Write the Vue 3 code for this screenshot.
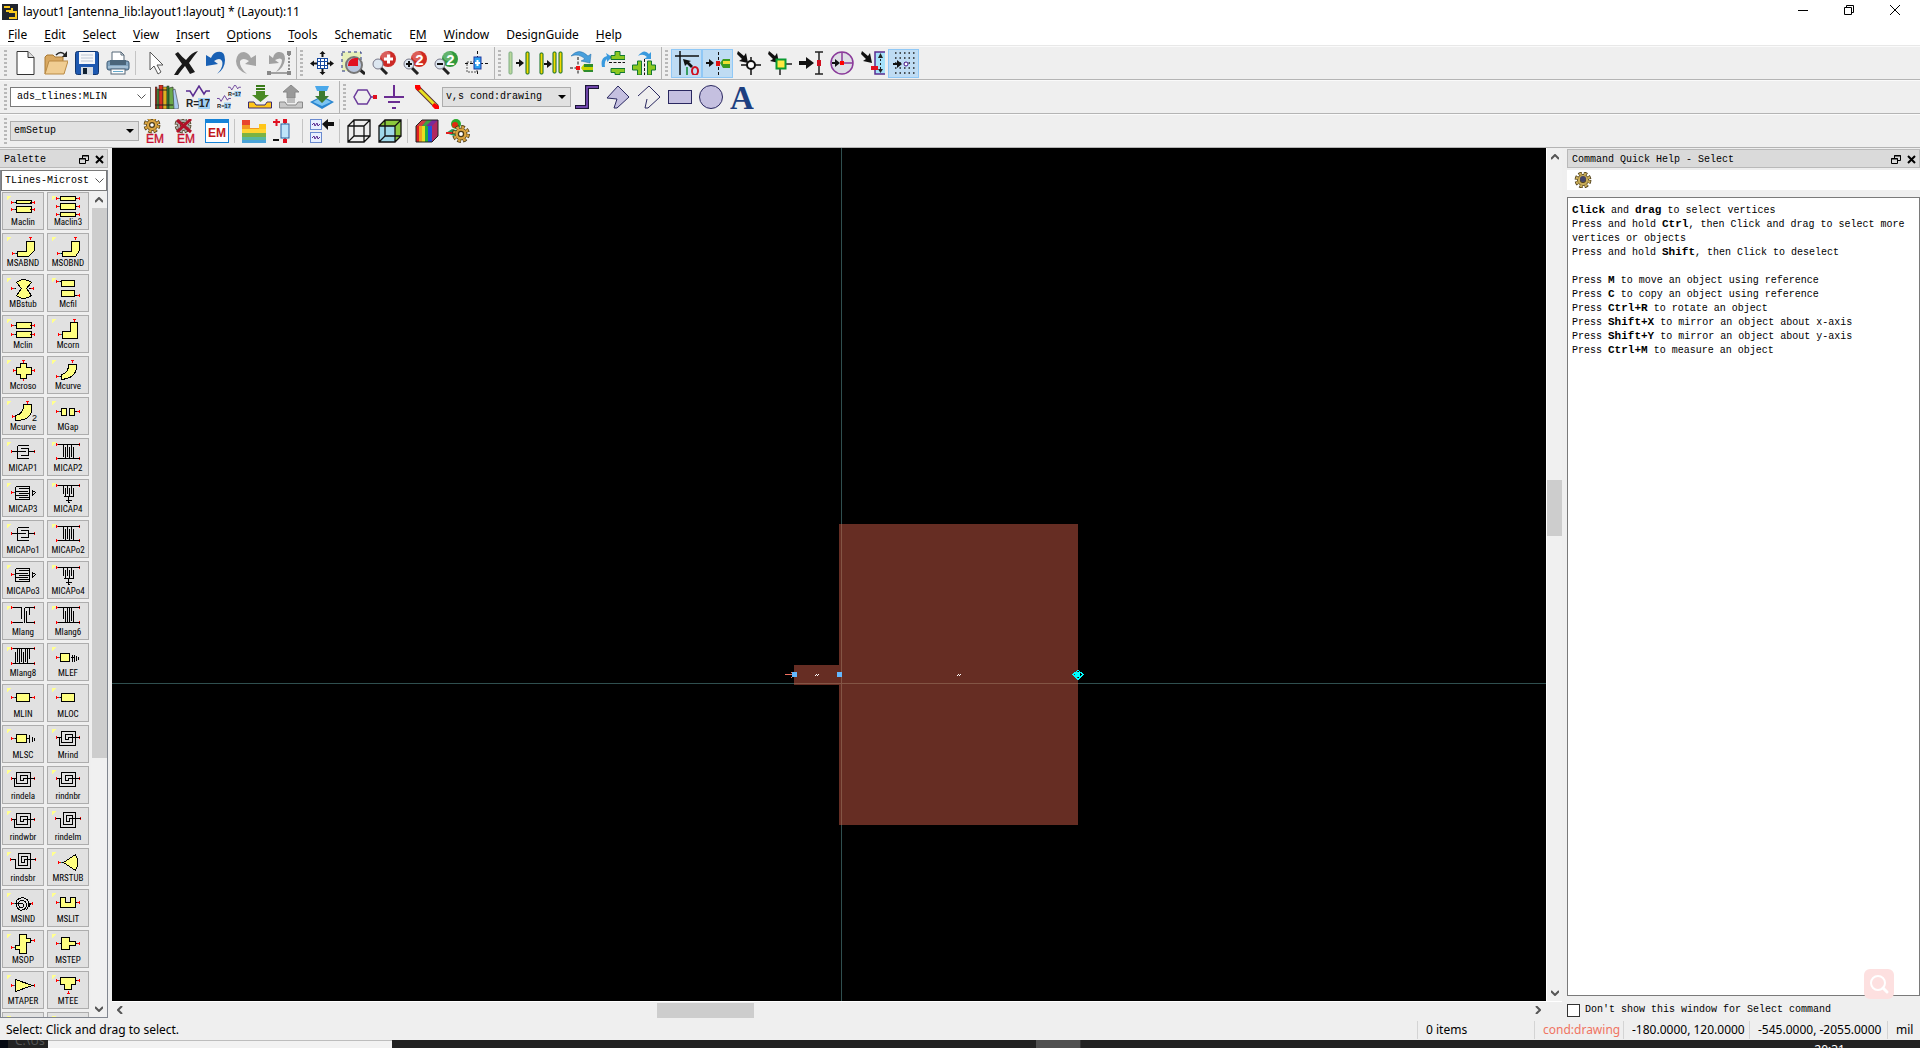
<script setup>
const menus = [
  ['', 'F', 'ile'], ['', 'E', 'dit'], ['', 'S', 'elect'], ['', 'V', 'iew'], ['', 'I', 'nsert'],
  ['', 'O', 'ptions'], ['', 'T', 'ools'], ['S', 'c', 'hematic'], ['E', 'M', ''], ['', 'W', 'indow'],
  ['DesignGuide', '', ''], ['', 'H', 'elp'],
]

const gear = (x, y, s, c = '#d9a441') =>
  `<g transform="translate(${x} ${y}) scale(${s})"><circle r="8" fill="none" stroke="#4a3a18" stroke-width="5" stroke-dasharray="4 2.280"/><circle r="7" fill="${c}" stroke="#4a3a18"/><circle r="8" fill="none" stroke="${c}" stroke-width="3" stroke-dasharray="3 3.280" stroke-dashoffset="-.5"/><circle r="3" fill="#fff" stroke="#4a3a18" stroke-width="1.500"/></g>`
const em = '<text x="12" y="23.500" text-anchor="middle" font-family="Liberation Sans" font-size="12" fill="#c8102e" stroke="#c8102e" stroke-width=".3">EM</text>'
const arrowR = (x, y, l = 7) => `<path d="M${x} ${y - 1}h${l - 4}v-3l5 4-5 4v-3h${4 - l}z" fill="#111"/>`
const arrowD = '<path d="M1 0L7 5 9 2 11 12 2 10 5 8 0 3z" fill="#111"/>'
const magnify = (fill, t, g) =>
  `<circle cx="16" cy="8" r="8" fill="${fill}"/><circle cx="14" cy="5" r="5" fill="#fff" opacity=".25"/><text x="16.500" y="13.500" text-anchor="middle" font-family="Liberation Sans" font-weight="700" font-size="15" fill="#fff">${t}</text><path d="M9 17l6 6" stroke="#222" stroke-width="3"/><circle cx="6" cy="13" r="5" fill="#dce6f0" stroke="#778" />${g}`
const book = (x, y, w, c) => `<rect x="${x}" y="${y}" width="${w}" height="${24 - y}" fill="${c}" stroke="#222" stroke-width=".5"/>`
const resistor = (x, y, s) => `<g transform="translate(${x} ${y}) scale(${s})"><path d="M0 6h4l3 5 6-10 5 8 2-3h4" fill="none" stroke="#5a2d91" stroke-width="1.500"/><rect x="12" y="13" width="12" height="11" fill="#9fd0f5"/><text x="0" y="22" font-family="Liberation Sans" font-weight="700" font-size="10" fill="#222">R=17</text></g>`

const I = {
  new: '<path d="M4 .5h11l6 6v17H4z" fill="#fff" stroke="#333"/><path d="M15 .5v6h6" fill="#ddd" stroke="#333"/>',
  open: '<path d="M1 23V6l2-2h6l2 2h8v4" fill="#d9a860" stroke="#a87832"/><path d="M1 23L5 10h19l-4 13z" fill="#f0cd92" stroke="#b98a44"/><path d="M12 4q5-5 9 0" fill="none" stroke="#222" stroke-width="1.500"/><path d="M23 0v6h-5z" fill="#222"/>',
  save: '<rect x=".5" y=".5" width="23" height="23" rx="2" fill="#1d58b0" stroke="#12376f"/><rect x="4" y="1" width="16" height="12" fill="#f5f7fa"/><path d="M6 4h12M6 7h12M6 10h12" stroke="#bcc6d4"/><rect x="6" y="16" width="12" height="8" fill="#d4dae2"/><rect x="8" y="17" width="4" height="6" fill="#123"/>',
  print: '<path d="M6 10V1h9l3 3v6" fill="#fff" stroke="#567"/><path d="M15 1v3h3" fill="none" stroke="#567"/><rect x="1" y="10" width="22" height="9" rx="2" fill="#83a5c0" stroke="#3c5a74"/><path d="M4 9h16v5H4z" fill="#4a657a"/><path d="M2 16h20" stroke="#c9dcea"/><rect x="5" y="18" width="14" height="5" fill="#fff" stroke="#567"/><path d="M7 20.500h10" stroke="#6ac"/>',
  cursor: '<path d="M7 1v18l4-4 4 8 3-2-4-7h6z" fill="#fff" stroke="#555"/>',
  del: '<path d="M4 1q4 5 8 8 6-8 12-9-5 6-9 12l6 9-5 2-5-8q-5 6-7 9H0q4-7 8-11L1 3z" fill="#1a1a1a"/>',
  undo: '<path d="M1 4v11l12-2-4-3q6-4 8 0 2 6-5 13 8-5 8-14 0-10-8-8-4 1-6 6z" fill="#1860b4"/>',
  redo: '<path d="M20 4v11L9 13l4-3q-6-4-9 0-1 6 7 13Q0 19 0 10 1 1 8 1q5 1 7 6z" fill="#a4a4a4"/>',
  last: '<path d="M2 4v9l10-1-4-3q6-3 7 0 0 5-6 12 8-4 9-13 0-8-7-7-4 1-5 6z" fill="#a0a0a0"/><path d="M22 3v16" stroke="#888" stroke-width="2" stroke-dasharray="2 1.500"/><path d="M3 22h18" stroke="#888" stroke-width="1.500"/><path d="M20 0h4v4h-4zM20 20h4v4h-4zM0 20h4v4H0z" fill="#888"/>',
  pan: '<rect x="7" y="7" width="11" height="11" fill="#fff"/><path d="M7.500 7v11M10.500 7v11M14.500 7v11M17.500 7v11M7 7.500h11M7 10.500h11M7 14.500h11M7 17.500h11" stroke="#1548a0"/><path d="M12.500 0l3 3h-2v3h-2V3h-2zM12.500 24l3-3h-2v-3h-2v3h-2zM0 12.500l4-3v2h3v2H4v2zM24 12.500l-4-3v2h-3v2h3v2z" fill="#111"/>',
  zarea: '<rect x="1" y="1" width="19" height="19" fill="#e7f0ba" stroke="#203080" stroke-dasharray="3 3"/><path d="M18 18l6 5" stroke="#222" stroke-width="3"/><circle cx="13" cy="14" r="8" fill="#b9c5dc" stroke="#777" stroke-width="2"/><path d="M7 14a7 7 0 0 1 7-7h3v8H7z" fill="#e01020"/>',
  zin: magnify('#cc2a26', '', '<path d="M12 8h9M16.500 3.500v9" stroke="#fff" stroke-width="3"/>'),
  z2: magnify('#d02a20', '2', '<path d="M3 13h6M6 10v6" stroke="#111" stroke-width="2"/>'),
  z2o: magnify('#2f9a3c', '2', '<path d="M3 13h6" stroke="#111" stroke-width="2"/>'),
  center: '<path d="M12.500 0v24M0 12.500h24" stroke="#111" stroke-dasharray="3 2"/><rect x="2" y="11" width="10" height="10" fill="none" stroke="#555" stroke-dasharray="2 1"/><rect x="9" y="6" width="7" height="12" fill="#2aa0f0" stroke="#2038a0"/><path d="M12.500 9v6M10 12h5" stroke="#fff" stroke-width="2"/>',
  bar1: '<rect x="1" y="1" width="3" height="22" rx="1" fill="#b9d79b" stroke="#7fae84"/><rect x="18" y="1" width="3" height="22" rx="1" fill="#f4d900" stroke="#0a6a20"/>' + arrowR(8, 12),
  bar2: '<rect x="1" y="2" width="3" height="21" rx="1" fill="#f4d900" stroke="#0a6a20"/><rect x="14" y="1" width="3" height="21" rx="1" fill="#f4d900" stroke="#0a6a20"/><rect x="20" y="1" width="3" height="21" rx="1" fill="#f4d900" stroke="#0a6a20"/>' + arrowR(5, 13),
  rot: '<path d="M1 5Q9-4 18 5l3-2-1 9-9-2 4-2Q9 2 1 5z" fill="#4aa0dc" stroke="#1b68a8" stroke-width=".5"/><path d="M0 17h6M8 6v18" stroke="#111" stroke-dasharray="3 1.500"/><rect x="6" y="15" width="4" height="4" fill="#e11"/><path d="M14 13h9v8h-9l-3-4z" fill="#c8d400"/><path d="M14 13h9v3h-9zM13 19h10v2h-9z" fill="#2e8b2e"/>',
  mirx: '<path d="M1 16Q-1 7 6 5l-1-3 6 4-5 5V8q-3 2-2 8z" fill="#3a9ade"/><path d="M14 .5h5v4h5v4H10v-4h4zM10 17.500h14v4h-5v2h-5v-2h-4z" fill="#8cc820" stroke="#173" /><path d="M8 11.500h16" stroke="#111" stroke-dasharray="3 1.500"/>',
  miry: '<path d="M6 5Q12-3 17 3l2-2v7h-7l3-2Q11 2 6 5z" fill="#3a9ade"/><path d="M5.500 10h4v14h-4v-5h-5v-5h5zM15.500 10h4v4h4v5h-4v5h-4z" fill="#8cc820" stroke="#173"/><path d="M12.500 8v16" stroke="#111" stroke-dasharray="3 1.500"/>',
  ortho: '<path d="M5 0v24M0 5h24" stroke="#111" stroke-width="1.500"/><path d="M8 8l8 2-2 1 4 4-2 2-4-4-2 2z" fill="#111"/><path d="M12 16v8" stroke="#0a8a30" stroke-width="1.500"/><ellipse cx="20" cy="20" rx="3" ry="4" fill="none" stroke="#d01020" stroke-width="2"/>',
  snappin: '<path d="M12.500 1v23" stroke="#111" stroke-dasharray="3 2"/>' + arrowR(0, 12) + '<rect x="10" y="10" width="4" height="5" fill="#e01010"/><path d="M14 12l3-4h8v9h-8z" fill="#3a9a20"/><path d="M17 10h8v3h-8z" fill="#f0e030"/>',
  snapv: arrowD + '<path d="M14 6v18M4 14h20" stroke="#111" stroke-width="1.500"/><circle cx="14" cy="14" r="4" fill="#fff" stroke="#111" stroke-width="2"/>',
  snapm: arrowD + '<path d="M12 12v12M8 13h16" stroke="#222" stroke-width="1.500"/><rect x="8.500" y="8.500" width="9" height="9" fill="#ffe840" stroke="#0a9a30" stroke-width="2"/>',
  snape: '<path d="M0 10h7V6l8 6-8 6v-4H0z" fill="#111"/><path d="M16 1h8M16 23h8M20 1v22" stroke="#222" stroke-width="1.500"/><rect x="18" y="9" width="4" height="6" fill="#d01020"/>',
  snapc: '<circle cx="12" cy="12" r="11" fill="#dfdfe6" stroke="#8a3a9a" stroke-width="1.500"/><path d="M12 1v11h11" fill="none" stroke="#8a3a9a" stroke-width="1.500"/>' + arrowR(2, 12) + '<rect x="10" y="10" width="4" height="4" fill="#f00"/>',
  snapi: arrowD + '<path d="M24 1H14v22h10" fill="#a5e2fa" stroke="#5a2d91" stroke-width="1.500"/><rect x="10" y="15" width="7" height="4" fill="#e01020"/><path d="M19.500 4v16" stroke="#222" stroke-dasharray="2 2"/><path d="M17 7l2.500-5L22 7zM17 18l2.500 4 2.500-4z" fill="#222"/>',
  grid: '<path d="M3 2h22M3 7h22M3 12h22M3 17h22M3 22h22" stroke="#222" stroke-width="1.500" stroke-dasharray="1.500 3"/>' + arrowR(1, 13, 8) + '<circle cx="14" cy="13" r="2" fill="#fff" stroke="#418"/>',
  books: book(0, 2, 2, '#a83a28') + book(2, 4, 2, '#4a9a3a') + book(4, 0, 4, '#d83020') + book(8, 2, 4, '#e0b020') + book(12, 1, 2, '#2b8a3a') + '<path d="M14 3l4-1 2 21-2 1h-4z" fill="#6aa84a" stroke="#222" stroke-width=".6"/><path d="M18 5l2-1 4 19-2 1h-3z" fill="#a9c9f0" stroke="#222" stroke-width=".5"/><path d="M0 20h18M4 5h8" stroke="#222"/>',
  r17: resistor(0, 0, 1),
  rr17: resistor(11, -1, 0.54) + resistor(0, 10, 0.58),
  down: '<path d="M8 1h9M8 4h9" stroke="#3a7a1a" stroke-width="2"/><path d="M8 6h9v4h4l-8.500 7L4 10h4z" fill="#4a8a24"/><path d="M.5 17H6l2 3h9l2-3h4.500v6H.5z" fill="#ffc61a" stroke="#3a2a70"/>',
  up: '<path d="M12 0l8 7h-4v6H8V7H4zM8 15h8M8 17h8" fill="#999" stroke="#888"/><path d="M.5 17H6l2 3h9l2-3h4.500v6H.5z" fill="#c8c8c8" stroke="#888"/>',
  layer: '<path d="M12 11l12 6-12 7-12-7z" fill="#2a86d0"/><path d="M12 12l9 5-9 4-9-4z" fill="#7cc4f2"/><path d="M5 1h14l-2 5H7z" fill="#4aa8ea"/><path d="M9 6h6v5h4l-7 7-7-7h4z" fill="#3d7a30"/>',
  port: '<path d="M5 5h9l4 7-4 7H5l-4-7z" fill="none" stroke="#6a3a9a" stroke-width="1.500"/><path d="M18 12h3" stroke="#6a3a9a" stroke-width="1.500"/><rect x="20" y="10" width="4" height="4" fill="#e01020"/>',
  gnd: '<path d="M10 0v12M0 12h20M4 17h12M8 23h4" stroke="#6a2c92" stroke-width="2"/>',
  wire: '<path d="M2 2l20 20" stroke="#5a3030" stroke-width="5"/><path d="M3 3l18 18" stroke="#e8e020" stroke-width="3"/><path d="M0 0h5l1 4-3 2-3-3zM19 18l5 3v3h-4l-3-3z" fill="#f00"/>',
  path: '<path d="M0 22h12V2h12" fill="none" stroke="#1c1638" stroke-width="4"/><path d="M1 22h11V2h11" fill="none" stroke="#85c" stroke-width="1.500"/>',
  poly: '<path d="M12 1l11 11-12 11H8l3-9-10-1z" fill="#c5c0e0" stroke="#2a2860"/>',
  pline: '<path d="M1 11L12 1l11 11-12 11H8l2-9" fill="none" stroke="#2a2860"/>',
  rect: '<rect x=".5" y="5.500" width="23" height="13" fill="#c5c0e0" stroke="#2a2860"/>',
  circ: '<circle cx="12" cy="12" r="11.500" fill="#c5c0e0" stroke="#2a2860"/>',
  text: '<text x="12" y="23.500" text-anchor="middle" font-family="Liberation Serif" font-weight="700" font-size="33" fill="#1c3f80">A</text>',
  em1: gear(9, 6, 0.8) + em,
  em2: gear(9, 6, 0.8, '#aaa') + em + '<path d="M3 1l14 12M17 0L3 13" stroke="#b01028" stroke-width="3"/>',
  em3: '<rect x=".5" y=".5" width="23" height="23" fill="#fff" stroke="#1683d8"/><rect x="0" y="0" width="24" height="4" fill="#1683d8"/><text x="12" y="18" text-anchor="middle" font-family="Liberation Sans" font-weight="700" font-size="12" fill="#c01818">EM</text>',
  subs: '<path d="M0 1h8v5H0z" fill="#e8452c"/><path d="M0 6h8v3h16v2H0z" fill="#f29a20"/><path d="M17 5h7v5h-7z" fill="#ffc61a"/><path d="M0 10h24v4H0z" fill="#ffd530"/><path d="M0 14h24v4H0z" fill="#7cb342"/><path d="M0 18h24v4H0z" fill="#58b8a0"/><path d="M0 21h24v3H0z" fill="#4aa3d8"/>',
  portedit: '<path d="M0 3h7M3.500 0v7" stroke="#e01020" stroke-width="2"/><path d="M0 21h6" stroke="#111" stroke-width="2"/><path d="M12 0v24" stroke="#222"/><rect x="8" y="5" width="8" height="14" fill="#bfe4fa" stroke="#2a60a0"/><path d="M10 0h4v4h-4zM10 20h4v4h-4z" fill="#e01020"/>',
  comp: '<g fill="#e8f0ff" stroke="#6a8ad0"><rect x=".5" y=".5" width="11" height="10"/><rect x=".5" y="13.500" width="11" height="10"/></g><path d="M2 6l2-2 1 3 2-3 1 3 2-2M2 19l2-2 1 3 2-3 1 3 2-2" fill="none" stroke="#5a2d91"/><path d="M12 5l6-5v3h6v4h-6v4z" fill="#111"/>',
  cube: '<path d="M1 7h16v16H1zM7 1h16v16H7zM1 7l6-6M17 7l6-6M17 23l6-6M1 23l6-6" fill="none" stroke="#111" stroke-width="1.300"/>',
  cube2: '<path d="M1 7l6-6h16v16l-6 6H1z" fill="#8cc83c"/><path d="M1 7h16v16H1z" fill="#9fd8e8"/><path d="M1 7h16v16H1zM7 1h16v16H7zM1 7l6-6M17 7l6-6M17 23l6-6M1 23l6-6" fill="none" stroke="#111" stroke-width="1.300"/>',
  cube3: '<path d="M1 7l6-6h16v16l-6 6H1z" fill="#7a2a9a"/><path d="M1 7h3v16H1z" fill="#e02020"/><path d="M4 7h3v16H4z" fill="#f0a020"/><path d="M7 7h3v16H7z" fill="#e8e020"/><path d="M10 7h3v16h-3z" fill="#20b040"/><path d="M13 7h4v16h-4z" fill="#2050e0"/><path d="M17 7l6-6v16l-6 6z" fill="#b02860"/><path d="M1 7l6-6h5L7 7z" fill="#d04040"/><path d="M7 7l5-6h5l-6 6z" fill="#40a040"/><path d="M1 7l6-6h16v16l-6 6H1z" fill="none" stroke="#222"/>',
  emgear: '<circle cx="10" cy="5" r="5" fill="#2aa82a"/><circle cx="9" cy="6" r="3" fill="#e02a10"/><path d="M0 14l6-4 8 2-6 5z" fill="#28a060"/><path d="M0 14h8" stroke="#e02020" stroke-width="2"/>' + gear(15, 15, 0.85),
}

const row1 = [
  { items: ['new', 'open', 'save', 'print', '|', 'cursor', 'del', 'undo', 'redo', 'last'] },
  { items: ['pan', 'zarea', 'zin', 'z2', 'z2o', 'center'] },
  { items: ['bar1', 'bar2', 'rot', 'mirx', 'miry'] },
  { items: ['ortho', 'snappin', 'snapv', 'snapm', 'snape', 'snapc', 'snapi', 'grid'] },
]
const active = ['ortho', 'snappin', 'grid']
const row2a = ['books', 'r17', 'rr17', 'down', 'up', 'layer']
const row2b = ['port', 'gnd', 'wire']
const row2c = ['path', 'poly', 'pline', 'rect', 'circ', 'text']
const row3 = ['em1', 'em2', 'em3', '|', 'subs', 'portedit', '|', 'comp', '|', 'cube', 'cube2', '|', 'cube3', 'emgear']

const Y = '#ffff80'
const pin = (x, y) => `<path d="M${x} ${y - 1}h1v3h-1zM${x} ${y}h3v1h-3z" fill="#f00"/>`
const L = (y, x = 9) => `<path d="M${x} ${y}h5v1h-5z" fill="#000"/>` + pin(x, y) + `<path d="M${x + 3} ${y}h1v1h-1z" fill="#088"/>`
const R = (y, x = 32) => `<path d="M${x - 4} ${y}h5v1h-5z" fill="#000"/><path d="M${x} ${y - 1}h1v3h-1zM${x - 2} ${y}h3v1h-3z" fill="#f00"/>`
const T = (x, y = 4) => `<path d="M${x - 1} ${y}h3v1h-3zM${x} ${y}h1v3h-1z" fill="#f00"/>`
const B = (x, y = 24) => `<path d="M${x - 1} ${y}h3v1h-3zM${x} ${y - 2}h1v3h-1z" fill="#f00"/>`
const box = (x, y, w, h) => `<rect x="${x}.5" y="${y}.5" width="${w}" height="${h}" fill="${Y}" stroke="#000"/>`
const shape = (d) => `<path transform="translate(.5 .5)" d="${d}" fill="${Y}" stroke="#000"/>`
const line = (d) => `<path transform="translate(.5 .5)" d="${d}" fill="none" stroke="#000"/>`
const spiral = L(12) + R(12) + line('M9 12H12V20H28V6H14V17H25V9H18V14H21V12H32')
const spiral2 = L(11, 8) + R(11, 33) + line('M8 11H13V20H28V5H16V17H25V8H19V14H22V11H33')
const cap1 = L(13) + R(13) + line('M9 13H15M15 7V20M15 7H26M15 13H23M15 20H26M26 10V17M26 10H18M26 17H18M26 13H32')
const cap2 = L(6) + R(6) + L(20) + R(20) + line('M10 6H32M10 20H32M16 6V18M18 8V20M20 6V18M22 8V20M24 6V18M26 8V20')
const cap3 = L(13) + line('M13 7V20M13 7H27M13 12H25M13 16H25M13 20H27M16 9H27M16 14H27M16 18H27M27 7V20M30 11L33 13L30 16Z')
const cap4 = L(6) + R(6) + line('M10 6H32M16 6V14M18 8V17M20 6V14M22 8V17M24 6V14M26 8V17M16 17H26M21 17V22M18 21H24M20 23H22')
const elbow = (cut) => T(28) + L(20, 10) + shape(`M24 8H32V17L${cut} 23H15V18H24Z`)

const parts = [
  ['Maclin', box(14, 8, 15, 3) + box(14, 14, 15, 6) + L(10) + R(10) + L(17) + R(17)],
  ['Maclin3', box(13, 4, 15, 4) + box(13, 11, 15, 6) + box(13, 20, 15, 4) + L(6) + R(6) + L(14) + R(14) + L(22) + R(22)],
  ['MSABND', elbow(26)], ['MSOBND', elbow(28)],
  ['MBstub', L(14) + R(14, 31) + shape('M14 8Q21 2 29 8L24 14L29 21Q21 27 14 21L19 14Z')],
  ['Mcfil', L(7) + R(21) + box(14, 6, 13, 6) + box(14, 16, 13, 6)],
  ['Mclin', box(14, 7, 15, 6) + box(14, 16, 15, 6) + L(10) + R(10) + L(19) + R(19)],
  ['Mcorn', T(27) + L(19, 11) + shape('M23 7H30V23H15V16H23Z')],
  ['Mcroso', L(14, 11) + R(14, 32) + T(21) + B(21, 25) + shape('M18 7H24V11H29V18H24V22H18V18H14V11H18Z')],
  ['Mcurve', T(25) + L(20) + shape('M21 8H29V12Q27 22 14 23V18Q21 17 21 8Z')],
  ['Mcurve', T(25) + L(19, 10) + shape('M21 7H29V14Q27 23 13 23V18Q21 17 21 7Z') + '<text x="30" y="24" font-family="Liberation Sans" font-size="9">2</text>'],
  ['MGap', L(14) + R(14) + box(14, 11, 5, 7) + box(22, 11, 5, 7)],
  ['MICAP1', cap1], ['MICAP2', cap2], ['MICAP3', cap3], ['MICAP4', cap4],
  ['MICAPo1', cap1], ['MICAPo2', cap2], ['MICAPo3', cap3], ['MICAPo4', cap4],
  ['Mlang', L(5) + R(5) + L(20) + R(20) + line('M10 5H19V16M10 20H20M22 5V20M22 5H32M24 8V20M24 20H32M27 5V12')],
  ['Mlang6', L(5) + R(5) + L(20) + R(20) + line('M10 5H32M10 20H32M16 5V16M18 8V20M20 5V20M22 5V20M24 5V18M26 8V20')],
  ['Mlang8', L(5) + R(5) + L(20) + R(20) + line('M10 5H32M10 20H32M13 8V20M15 5V18M17 5V20M19 5V18M21 8V20M23 5V18M25 5V20M27 5V15')],
  ['MLEF', L(14) + box(13, 10, 9, 8) + line('M23 14H26M25 11V18M27 11V18M29 12V17M31 13V16')],
  ['MLIN', L(13) + R(13) + box(14, 9, 13, 8)], ['MLOC', L(13) + box(14, 9, 13, 8)],
  ['MLSC', L(13) + box(14, 9, 10, 8) + line('M24 13H27M27 9V17M30 11V16M32 12V15')],
  ['Mrind', spiral], ['rindela', spiral], ['rindnbr', spiral], ['rindwbr', spiral], ['rindelm', spiral2], ['rindsbr', spiral2],
  ['MRSTUB', L(14, 11) + shape('M16 14L28 6Q33 14 28 22Z')],
  ['MSIND', L(14) + R(14, 30) + line('M13 14H19Q22 14 21 17Q18 20 16 16Q15 10 21 11Q26 14 23 19Q17 23 14 17Q12 9 20 8Q27 9 26 16L24 21M26 18L28 14')],
  ['MSLIT', L(13) + R(13) + shape('M13 8H18V13H23V8H28V18H13Z')],
  ['MSOP', R(10) + L(17) + shape('M17 4H24V8H28V12H24V23H17V19H13V15H17Z')],
  ['MSTEP', L(13) + R(13) + shape('M14 7H22V11H28V15H22V19H14Z')],
  ['MTAPER', L(14) + R(14) + shape('M13 8L30 14L13 20Z')],
  ['MTEE', L(9) + R(9) + B(21, 22) + shape('M13 6H28V13H24V18H17V13H13Z')],
  ['', ''], ['', ''],
]

const help = [
  [['Click', 1], [' and '], ['drag', 1], [' to select vertices']],
  [['Press and hold '], ['Ctrl', 1], [', then Click and drag to select more vertices or objects']],
  [['Press and hold '], ['Shift', 1], [', then Click to deselect']],
  [['\u00a0']],
  [['Press '], ['M', 1], [' to move an object using reference']],
  [['Press '], ['C', 1], [' to copy an object using reference']],
  [['Press '], ['Ctrl+R', 1], [' to rotate an object']],
  [['Press '], ['Shift+X', 1], [' to mirror an object about x-axis']],
  [['Press '], ['Shift+Y', 1], [' to mirror an object about y-axis']],
  [['Press '], ['Ctrl+M', 1], [' to measure an object']],
]
const float = '<path d="M3.500 3V.5h6v5H7M.5 3.500h6v5h-6zM3 1h7M0 4h7" fill="none" stroke="#000"/>'
const cross = '<path d="M1 1l7 7M8 1L1 8" stroke="#000" stroke-width="2"/>'
const helpGear = gear(9, 8, 0.8, '#c8ac58') + '<circle cx="9" cy="7" r="3" fill="#446"/>'
</script>

<template>
  <div class="app">
    <header class="title">
      <svg class="logo" width="16" height="16"><rect width="16" height="16" fill="#20242c" /><path d="M2 3h6M4 7h6v-3M7 8h7v6H7" fill="none" stroke="#f7c81e" stroke-width="2" /></svg>
      <span>layout1 [antenna_lib:layout1:layout] * (Layout):11</span>
      <div class="winbtns">
        <button aria-label="Minimize"><svg width="10" height="10"><path d="M0 5.500h10" stroke="#000" /></svg></button>
        <button aria-label="Restore"><svg width="10" height="10"><path d="M.5 2.500h7v7h-7zM2.500 2V.5h7v7H8" fill="none" stroke="#000" /></svg></button>
        <button aria-label="Close"><svg width="10" height="10"><path d="M0 0l10 10M10 0L0 10" stroke="#000" /></svg></button>
      </div>
    </header>

    <nav class="menu">
      <button v-for="m in menus" :key="m.join('')">{{ m[0] }}<u>{{ m[1] }}</u>{{ m[2] }}</button>
    </nav>

    <div class="bar">
      <div v-for="(g, k) in row1" :key="k" class="group">
        <i class="grip"></i>
        <template v-for="(n, j) in g.items" :key="j">
          <i v-if="n === '|'" class="sep"></i>
          <button v-else class="tool" :class="{ on: active.includes(n) }" :aria-label="n"><svg width="24" height="24" v-html="I[n]"></svg></button>
        </template>
      </div>
    </div>
    <div class="bar">
      <div class="group">
        <i class="grip"></i>
        <div class="combo white lib"><select aria-label="Component"><option>ads_tlines:MLIN</option></select><svg width="9" height="6"><path d="M.5.5l4 4 4-4" fill="none" stroke="#555" /></svg></div>
        <button v-for="n in row2a" :key="n" class="tool" :aria-label="n"><svg width="24" height="24" v-html="I[n]"></svg></button>
      </div>
      <div class="group">
        <i class="grip"></i>
        <button v-for="n in row2b" :key="n" class="tool" :aria-label="n"><svg width="24" height="24" v-html="I[n]"></svg></button>
        <div class="combo grey"><select aria-label="Layer"><option>v,s cond:drawing</option></select><svg width="8" height="4"><path d="M0 0h8L4 4z" /></svg></div>
        <button v-for="n in row2c" :key="n" class="tool" :aria-label="n"><svg width="24" height="24" v-html="I[n]"></svg></button>
      </div>
    </div>
    <div class="bar">
      <div class="group">
        <i class="grip"></i>
        <div class="combo grey setup"><select aria-label="EM setup"><option>emSetup</option></select><svg width="8" height="4"><path d="M0 0h8L4 4z" /></svg></div>
        <template v-for="(n, j) in row3" :key="j">
          <i v-if="n === '|'" class="sep"></i>
          <button v-else class="tool" :aria-label="n"><svg width="24" height="24" v-html="I[n]"></svg></button>
        </template>
      </div>
    </div>

    <main class="work">
      <aside class="palette">
        <div class="dockhead">
          <span>Palette</span>
          <button aria-label="Float"><svg width="10" height="9" v-html="float"></svg></button>
          <button aria-label="Close"><svg width="9" height="9" v-html="cross"></svg></button>
        </div>
        <div class="pbody">
          <div class="combo pal"><select aria-label="Palette"><option>TLines-Microst</option></select><svg width="9" height="6"><path d="M.5.5l4 4 4-4" fill="none" stroke="#555" /></svg></div>
          <div class="plist">
            <div class="grid">
              <button v-for="(p, k) in parts" :key="k" class="part">
                <svg width="40" height="24" viewBox="1 1 40 24" shape-rendering="crispEdges">
                  <path d="M5 4h4v1h-1v1h-1v1h-1v1h-1z" fill="#ffff90" /><g v-html="p[1]"></g>
                </svg>
                <span>{{ p[0] }}</span>
              </button>
            </div>
            <div class="vbar">
              <svg width="8" height="6"><path d="M0 5l4-4 4 4" fill="none" stroke="#555" stroke-width="2" /></svg>
              <i class="thumb"></i>
              <svg class="end" width="8" height="6"><path d="M0 1l4 4 4-4" fill="none" stroke="#555" stroke-width="2" /></svg>
            </div>
          </div>
        </div>
      </aside>

      <section class="view">
        <div class="vrow">
          <svg class="canvas" viewBox="0 0 1434 853" preserveAspectRatio="xMidYMid slice" shape-rendering="crispEdges">
            <path d="M729 0h1v853h-1zM0 535h1434v1H0z" fill="#2f4f4f" />
            <path d="M682 517h45V376h239v301H727V537h-45z" fill="#662d23" />
            <path d="M729 376h1v301h-1zM682 535h284v1H682z" fill="#835545" />
            <path d="M673 526h7v1h-7zM679 524h1v1h-1zM679 529h1v1h-1z" fill="#f07060" />
            <path d="M680 524h5v5h-5zM725 524h5v5h-5z" fill="#63b8ff" />
            <path d="M703 527h1v1h-1zM704 526h1v1h-1zM705 527h1v1h-1zM706 526h1v1h-1zM845 527h1v1h-1zM846 526h1v1h-1zM847 527h1v1h-1zM848 526h1v1h-1z" fill="#fff" />
            <path d="M963 524h5v5h-5z" fill="#0ff" />
            <path d="M961 526.500l5-4.500 5 4.500-5 5z" fill="none" stroke="#0ff" />
          </svg>
          <div class="vbar main">
            <svg width="8" height="6"><path d="M0 5l4-4 4 4" fill="none" stroke="#555" stroke-width="2" /></svg>
            <i class="thumb"></i>
            <svg class="end" width="8" height="6"><path d="M0 1l4 4 4-4" fill="none" stroke="#555" stroke-width="2" /></svg>
          </div>
        </div>
        <div class="hbar">
          <svg width="6" height="8"><path d="M5 0L1 4l4 4" fill="none" stroke="#555" stroke-width="2" /></svg>
          <i class="before"></i><i class="thumb"></i><i class="after"></i>
          <svg width="6" height="8"><path d="M1 0l4 4-4 4" fill="none" stroke="#555" stroke-width="2" /></svg>
        </div>
      </section>

      <aside class="help">
        <div class="dockhead">
          <span>Command Quick Help - Select</span>
          <button aria-label="Float"><svg width="10" height="9" v-html="float"></svg></button>
          <button aria-label="Close"><svg width="9" height="9" v-html="cross"></svg></button>
        </div>
        <div class="helptools"><button aria-label="Settings"><svg width="18" height="16" v-html="helpGear"></svg></button></div>
        <div class="helptext">
          <p v-for="(l, k) in help" :key="k"><template v-for="(s, j) in l" :key="j"><b v-if="s[1]">{{ s[0] }}</b><template v-else>{{ s[0] }}</template></template></p>
          <button class="find" aria-label="Search"><svg width="30" height="30"><circle cx="14" cy="14" r="7" fill="none" stroke="#fff" stroke-width="2" /><path d="M19 19l4 4" stroke="#fff" stroke-width="3" stroke-linecap="round" /></svg></button>
        </div>
        <label class="check"><input type="checkbox" /><span>Don't show this window for Select command</span></label>
      </aside>
    </main>

    <footer class="status">
      <span class="msg">Select: Click and drag to select.</span>
      <span class="cell items">0 items</span>
      <span class="cell layer">cond:drawing</span>
      <span class="cell pos">-180.0000, 120.0000</span>
      <span class="cell delta">-545.0000, -2055.0000</span>
      <span class="cell unit">mil</span>
    </footer>
    <div class="task">
      <i class="t1"></i><span class="t2">C:\Us</span><i class="t3"></i><i class="t4"></i><span class="clock">20:31</span>
    </div>
  </div>
</template>

<style>
body { overflow: hidden; }
</style>

<style scoped>
* { box-sizing: border-box; }
.app { display: flex; flex-direction: column; height: 100vh; background: #efefef; color: #000; font: 12px/16px "Noto Sans", "Open Sans", sans-serif; overflow: hidden; }
button { border: 0; padding: 0; margin: 0; background: none; font: inherit; color: inherit; }
svg { display: block; flex: none; }
i { flex: none; }
.title { display: flex; align-items: center; height: 23px; padding: 0 2px; gap: 5px; background: #fff; flex: none; }
.winbtns { display: flex; margin-left: auto; padding-bottom: 3px; }
.winbtns button { width: 46px; height: 20px; display: flex; align-items: center; justify-content: center; }
.menu { display: flex; height: 23px; padding: 1px 0 0 8px; gap: 17px; background: #fff; border-bottom: 1px solid #e8e8e8; flex: none; }
.menu button { height: 22px; white-space: nowrap; }
.menu u { text-underline-offset: 2px; }

.bar { display: flex; height: 34px; border-bottom: 1px solid #b4b4b4; border-top: 1px solid #fafafa; flex: none; }
.group { display: flex; align-items: center; border-right: 1px solid #b4b4b4; padding-right: 2px; }
.group:last-child { border-right: 0; }
.grip { width: 3px; height: 26px; margin: 0 3px; background: repeating-linear-gradient(#b8b8b8 0 2px, transparent 2px 4px); }
.group:first-child .grip { margin: 0 2px 0 4px; }
.sep { width: 1px; height: 24px; margin: 0 3px 0 2px; background: #c4c4c4; }
.tool { display: flex; align-items: center; justify-content: center; width: 31px; height: 29px; flex: none; }
.tool.on { background: #bfdcf3; border: 1px solid #90c8f6; }
.tool svg { overflow: hidden; }

.combo { position: relative; display: flex; align-items: center; flex: none; height: 20px; }
.combo select { appearance: none; width: 100%; height: 100%; margin: 0; border: 1px solid #adadad; border-radius: 0; background: #e1e1e1; padding: 0 3px; font: 10px/14px "Liberation Mono", monospace; color: #000; }
.combo svg { position: absolute; right: 5px; }
.combo.white { width: 141px; }
.combo.white select { background: #fff; border-color: #7a7a7a; padding: 0 6px; }
.combo.grey { width: 129px; }
.lib, .setup { margin-left: 1px; }

.work { display: flex; flex: 1; min-height: 0; }
.palette { display: flex; flex-direction: column; width: 112px; padding: 1px 4px 0 0; flex: none; }
.dockhead { display: flex; align-items: center; height: 19px; border: 1px solid #b9b9b9; background: #dadada; padding: 2px 3px 0 4px; gap: 6px; font: 10px/14px "Liberation Mono", monospace; flex: none; }
.dockhead span { margin-right: auto; }
.palette .dockhead { border-left: 0; }
.pbody { display: flex; flex-direction: column; flex: 1; min-height: 0; margin-top: 2px; border: 1px solid #828790; border-top: 0; }
.combo.pal { height: 21px; }
.combo.pal select { background: #fff; border: 1px solid #7a7a7a; padding: 1px 3px 0; }
.combo.pal svg { right: 3px; }
.plist { display: flex; flex: 1; min-height: 0; padding-left: 1px; }
.grid { display: grid; grid-template-columns: 42px 42px; grid-auto-rows: 38px; gap: 3px; align-content: start; overflow: hidden; padding-top: 1px; flex: 1; }
.part { display: flex; flex-direction: column; border: 1px solid #adadad; background: #e1e1e1; overflow: hidden; text-align: center; font: 9px/11px "Liberation Sans Narrow", "Roboto Condensed", "Liberation Sans", sans-serif; }
.vbar { display: flex; flex-direction: column; align-items: center; width: 16px; background: #f0f0f0; padding: 6px 0 5px; flex: none; }
.vbar .thumb { width: 15px; height: 550px; margin-top: 5px; background: #cdcdcd; }
.vbar .end { margin-top: auto; }

.view { display: flex; flex-direction: column; flex: 1; min-width: 0; }
.vrow { display: flex; flex: 1; min-height: 0; border-bottom: 1px solid #fff; }
.canvas { display: block; flex: 1 1 0; min-width: 0; width: 0; height: 100%; background: #000; }
.vbar.main { border-left: 1px solid #fff; }
.vbar.main .thumb { height: 56px; margin-top: 320px; }
.hbar { display: flex; align-items: center; height: 16px; padding: 0 21px 0 5px; flex: none; }
.hbar .thumb { width: 97px; height: 15px; background: #cdcdcd; }
.hbar .before { flex: 534; }
.hbar .after { flex: 781; }

.help { display: flex; flex-direction: column; width: 358px; padding: 1px 0 0 5px; flex: none; }
.helptools { height: 20px; margin-top: 2px; padding: 2px 7px; background: #fff; flex: none; }
.helptext { position: relative; flex: 1; min-height: 0; margin-top: 7px; border: 1px solid #7a7a7a; background: #fff; padding: 6px 4px; font: 10px/14px "Liberation Mono", monospace; }
.helptext p { margin: 0; }
.helptext b { font-size: 11px; line-height: 12px; }
.find { position: absolute; right: 25px; bottom: -4px; width: 30px; height: 30px; border-radius: 6px; background: #fde0e0; }
.check { display: flex; align-items: center; gap: 5px; height: 22px; padding-top: 6px; font: 10px/14px "Liberation Mono", monospace; flex: none; }
.check input { appearance: none; width: 13px; height: 13px; margin: 0; border: 1px solid #333; background: #fff; }

.status { display: flex; align-items: center; height: 22px; padding: 2px 0 0 6px; flex: none; }
.msg { flex: 1; }
.cell { height: 18px; line-height: 18px; padding-left: 8px; border-left: 1px solid #d4d4d4; white-space: nowrap; }
.items { width: 117px; }
.layer { width: 89px; color: #f07462; }
.pos { width: 126px; }
.delta { width: 138px; }
.unit { width: 33px; }
.task { display: flex; height: 8px; background: #222; overflow: hidden; flex: none; }
.t1 { width: 8px; background: #050912; }
.t2 { width: 40px; padding-left: 7px; line-height: 1px; color: #555; }
.t3 { width: 344px; background: #f2f2f2; border-top: 1px solid #bdbdbd; }
.t4 { width: 45px; margin-left: 644px; background: #505050; border-right: 1px solid #333; }
.clock { margin-left: auto; margin-right: 75px; line-height: 20px; color: #fff; }
</style>
